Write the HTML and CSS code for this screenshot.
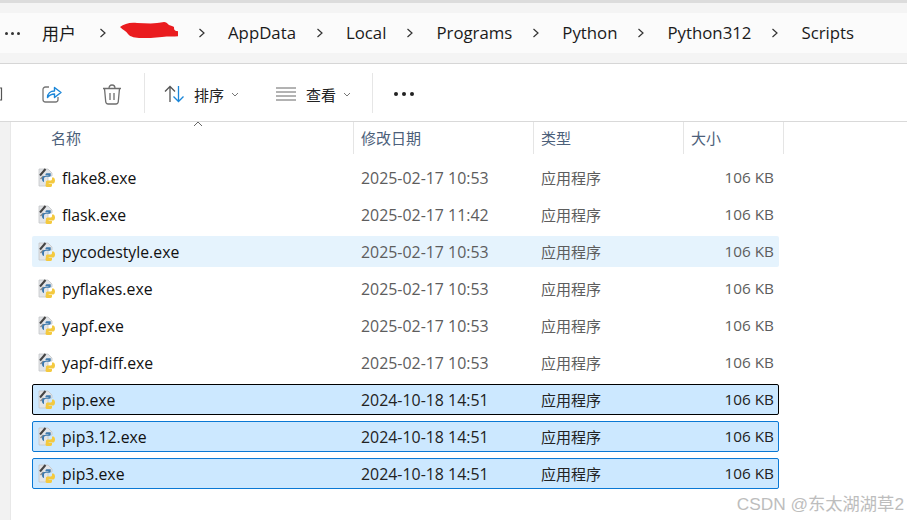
FILE: index.html
```html
<!DOCTYPE html>
<html lang="zh">
<head>
<meta charset="utf-8">
<title>Scripts</title>
<link rel="stylesheet" href="styles.css">
</head>
<body>
<svg class="defs" width="0" height="0">
  <symbol id="py" viewBox="0 0 20 20">
    <path d="M2 1h9l4 4v3H11v10H2z" fill="#e3e5e8" stroke="#c4c6c9" stroke-width=".8"/>
    <path d="M3 7.500l5.500-6.500" stroke="#444" stroke-width="2"/>
    <path d="M3.500 11l3-3" stroke="#8a8a8a" stroke-width="1.500"/>
    <path d="M7 14V10.500c0-1 1-1.700 2-1.700h3.500c.8 0 1.200-.5 1.200-1.200V5.200h-3.500C9 5.200 8.500 5.800 8.500 6.600v.9h3v.6H7.300C5.800 8.100 5 9.500 5 11c0 1.600.7 3 2 3z" fill="#3d79ad"/>
    <path d="M8.500 17.500c0 1 1 1.500 2.500 1.500h1.500c1.500 0 2.500-.5 2.500-1.500V16h-3.500v-.6h4.700c1.200 0 1.800-1.400 1.800-2.900 0-1.500-.7-3-1.800-3h-1.200V11c0 1-.8 1.600-1.800 1.600h-2.400c-1 0-1.800.5-1.800 1.500z" fill="#f4c93f"/>
  </symbol>
</svg>
<div class="window">
  <div class="topline"></div>
  <div class="address">
    <div class="crumbs">
      <span class="ell"><i></i><i></i><i></i></span>
      <span class="crumb cjk first">用户</span>
      <svg class="chev" viewBox="0 0 8 12"><path d="M1.500 2l4.500 4-4.500 4" /></svg>
      <span class="crumb redact"><svg width="64" height="18" viewBox="0 0 58 18" preserveAspectRatio="none"><path d="M0 5c4-3 10-5 17-4 7 0 14 1 20 0 3 0 5-1 7-1 2 0 3 1 5 3 2 1 4 1 5 2 0 2 0 3 2 4 3 0 6 1 7 2 1 1 0 2-2 3-6 1-13 0-19 1-8 1-15 1-21 1-5 0-11-1-13-4C6 9 3 8 0 5z" fill="#ea1c1f"/></svg></span>
      <svg class="chev" viewBox="0 0 8 12"><path d="M1.500 2l4.500 4-4.500 4" /></svg>
      <span class="crumb">AppData</span>
      <svg class="chev" viewBox="0 0 8 12"><path d="M1.500 2l4.500 4-4.500 4" /></svg>
      <span class="crumb">Local</span>
      <svg class="chev" viewBox="0 0 8 12"><path d="M1.500 2l4.500 4-4.500 4" /></svg>
      <span class="crumb">Programs</span>
      <svg class="chev" viewBox="0 0 8 12"><path d="M1.500 2l4.500 4-4.500 4" /></svg>
      <span class="crumb">Python</span>
      <svg class="chev" viewBox="0 0 8 12"><path d="M1.500 2l4.500 4-4.500 4" /></svg>
      <span class="crumb">Python312</span>
      <svg class="chev" viewBox="0 0 8 12"><path d="M1.500 2l4.500 4-4.500 4" /></svg>
      <span class="crumb last">Scripts</span>
    </div>
  </div>
  <div class="toolbar">
    <svg class="tb-cut" width="3" height="14" viewBox="0 0 3 14"><path d="M0 1h1.500v12H0" fill="none" stroke="#555" stroke-width="1.200"/></svg>
    <svg class="tb-share" width="20" height="20" viewBox="0 0 20 20"><path d="M7 3H3.500C2 3 1 4 1 5.500v10C1 17 2 18 3.500 18h10c1.500 0 2.500-1 2.500-2.500V13" fill="none" stroke="#777" stroke-width="1.300"/><path d="M5.500 13.500c0-4 3-6.500 7-6.500V3.500L19 8.500l-6.500 5V10c-3 0-5 1-7 3.500z" fill="#fff" stroke="#1b86d8" stroke-width="1.400" stroke-linejoin="round"/></svg>
    <svg class="tb-trash" width="20" height="21" viewBox="0 0 20 21"><path d="M1 4.500h18M7 4.500c0-2 1-3.500 3-3.500s3 1.500 3 3.500" fill="none" stroke="#6e6e6e" stroke-width="1.300"/><path d="M2.500 4.500l1.200 13c.1 1.500 1 2.500 2.500 2.500h7.600c1.500 0 2.400-1 2.500-2.500l1.200-13" fill="none" stroke="#6e6e6e" stroke-width="1.300"/><path d="M8 9v7M12 9v7" stroke="#6e6e6e" stroke-width="1.300"/></svg>
    <span class="tb-sep s1"></span>
    <svg class="tb-sort" width="21" height="18" viewBox="0 0 21 18"><path d="M6 17V1.500M1 6.500l5-5 5 5" fill="none" stroke="#555" stroke-width="1.300"/><path d="M14.500 1v15.500M9.500 11.500l5 5 5-5" fill="none" stroke="#1b86d8" stroke-width="1.300"/></svg>
    <span class="tb-label cjk l1">排序</span>
    <svg class="tb-caret c1" viewBox="0 0 8 5"><path d="M1 1l3 3 3-3"/></svg>
    <svg class="tb-view" width="20" height="14" viewBox="0 0 20 14"><path d="M0 1h20M0 5h20M0 9h20M0 13h20" stroke="#666" stroke-width="1"/></svg>
    <span class="tb-label cjk l2">查看</span>
    <svg class="tb-caret c2" viewBox="0 0 8 5"><path d="M1 1l3 3 3-3"/></svg>
    <span class="tb-sep s2"></span>
    <span class="tb-more"><i></i><i></i><i></i></span>
  </div>
  <div class="main">
    <div class="gutter"></div>
    <div class="content">
      <div class="head">
        <svg class="sort-up" viewBox="0 0 10 6"><path d="M1 5l4-4 4 4"/></svg>
        <div class="hc c-name cjk">名称</div>
        <div class="hc c-date cjk">修改日期</div>
        <div class="hc c-type cjk">类型</div>
        <div class="hc c-size cjk">大小</div>
      </div>
      <div class="rows">
        <div class="row"><span class="f-name"><svg class="py"><use href="#py"/></svg>flake8.exe</span><span class="f-date">2025-02-17 10:53</span><span class="f-type cjk">应用程序</span><span class="f-size">106 KB</span></div>
        <div class="row"><span class="f-name"><svg class="py"><use href="#py"/></svg>flask.exe</span><span class="f-date">2025-02-17 11:42</span><span class="f-type cjk">应用程序</span><span class="f-size">106 KB</span></div>
        <div class="row hover"><span class="f-name"><svg class="py"><use href="#py"/></svg>pycodestyle.exe</span><span class="f-date">2025-02-17 10:53</span><span class="f-type cjk">应用程序</span><span class="f-size">106 KB</span></div>
        <div class="row"><span class="f-name"><svg class="py"><use href="#py"/></svg>pyflakes.exe</span><span class="f-date">2025-02-17 10:53</span><span class="f-type cjk">应用程序</span><span class="f-size">106 KB</span></div>
        <div class="row"><span class="f-name"><svg class="py"><use href="#py"/></svg>yapf.exe</span><span class="f-date">2025-02-17 10:53</span><span class="f-type cjk">应用程序</span><span class="f-size">106 KB</span></div>
        <div class="row"><span class="f-name"><svg class="py"><use href="#py"/></svg>yapf-diff.exe</span><span class="f-date">2025-02-17 10:53</span><span class="f-type cjk">应用程序</span><span class="f-size">106 KB</span></div>
        <div class="row sel focus"><span class="f-name"><svg class="py"><use href="#py"/></svg>pip.exe</span><span class="f-date">2024-10-18 14:51</span><span class="f-type cjk">应用程序</span><span class="f-size">106 KB</span></div>
        <div class="row sel"><span class="f-name"><svg class="py"><use href="#py"/></svg>pip3.12.exe</span><span class="f-date">2024-10-18 14:51</span><span class="f-type cjk">应用程序</span><span class="f-size">106 KB</span></div>
        <div class="row sel"><span class="f-name"><svg class="py"><use href="#py"/></svg>pip3.exe</span><span class="f-date">2024-10-18 14:51</span><span class="f-type cjk">应用程序</span><span class="f-size">106 KB</span></div>
      </div>
    </div>
  </div>
  <div class="watermark">CSDN @东太湖湖草2</div>
</div>
</body>
</html>
```

FILE: styles.css
```css
* { box-sizing: border-box; }
html, body { margin: 0; padding: 0; background: #fff; }
body {
  width: 907px; height: 520px; overflow: hidden;
  font-family: "Open Sans", "Noto Sans CJK SC", sans-serif;
  color: #1c1c1c;
}
.defs { position: absolute; }
.window { position: relative; width: 907px; height: 520px; overflow: hidden; }
.cjk { font-family: "Noto Sans CJK SC", "Open Sans", sans-serif; }

.topline { height: 3px; background: #dcdcdc; }
.address {
  height: 61px; padding: 10px 0; background: #f4f4f4;
  border-bottom: 1px solid #d6d6d6;
}
.crumbs {
  height: 40px; background: #fbfbfb;
  display: flex; align-items: center; font-size: 16.800px; color: #1a1a1a;
}
.ell { width: 42px; padding-left: 5px; display: flex; gap: 3px; }
.ell i { width: 3px; height: 3px; border-radius: 50%; background: #333; display: block; }
.crumb { white-space: nowrap; line-height: 24px; }
.crumb.first { width: 37px; font-size: 17px; }
.crumb.redact { width: 58px; display: flex; margin: -4px 0 0 -9px; }
.chev { width: 8px; height: 12px; flex: none; margin-right: 22px; fill: none; stroke: #333; stroke-width: 1.200; }
.crumb + .chev { margin-left: 20px; }

.toolbar {
  height: 58px; padding-top: 3px; background: #fff; display: flex; align-items: center;
  border-bottom: 1px solid #d9d9d9;
}
.tb-cut { flex: none; margin-right: 39px; }
.tb-share { flex: none; margin-right: 40px; }
.tb-trash { flex: none; margin-right: 22px; }
.tb-sep { width: 1px; height: 40px; background: #e6e6e6; flex: none; margin-top: -3px; }
.tb-sort { flex: none; margin: 0 9px 0 19px; }
.tb-label { font-size: 15px; color: #222; flex: none; }
.tb-caret { width: 8px; height: 5px; flex: none; fill: none; stroke: #777; stroke-width: 1; }
.c1 { margin: 0 0 0 7px; }
.tb-view { flex: none; margin: 0 10px 0 37px; }
.c2 { margin: 0 21px 0 7px; }
.tb-more { display: flex; gap: 4px; margin-left: 21px; }
.tb-more i { width: 4px; height: 4px; border-radius: 50%; background: #222; display: block; }

.main { display: flex; height: 398px; }
.gutter { width: 11px; flex: none; background: #f2f2f2; border-right: 1px solid #e8e8e8; }
.content { flex: 1; position: relative; background: #fff; }

.head { display: flex; height: 32px; color: #4c607a; font-size: 15px; }
.hc { height: 32px; display: flex; align-items: center; padding: 0 0 2px 7px; border-right: 1px solid #e5e5e5; }
.c-name { width: 343px; padding-left: 40px; }
.c-date { width: 180px; }
.c-type { width: 150px; }
.c-size { width: 100px; }
.sort-up { position: absolute; left: 182px; top: -1px; width: 10px; height: 6px; fill: none; stroke: #666; stroke-width: 1; }

.rows { display: flex; flex-direction: column; gap: 6px; padding: 8px 128px 0 21px; }
.row {
  height: 31px; display: flex; align-items: center; font-size: 15.800px;
  border: 1px solid transparent; border-radius: 2px; color: #111;
}
.hover { background: #e5f3fd; }
.sel { background: #cce8ff; border-color: #0a78d4; }
.focus { border-color: #000; }
.f-name { width: 328px; display: flex; align-items: center; white-space: nowrap; flex: none; }
.py { width: 20px; height: 20px; flex: none; margin: 0 5px 0 4px; }
.f-date { width: 180px; flex: none; color: #5d5d5d; font-size: 15.900px; }
.f-type { width: 130px; flex: none; color: #5d5d5d; font-size: 15px; }
.f-size { flex: 1; text-align: right; padding: 0 4px 1px 0; color: #5d5d5d; font-size: 15.300px; }
.sel .f-date, .sel .f-type, .sel .f-size { color: #222; }
.watermark {
  position: absolute; right: 3px; bottom: 5px;
  font-family: "Liberation Sans", "Noto Sans CJK SC", sans-serif;
  font-size: 17.300px; color: #bdbdbd; white-space: nowrap;
}
```
